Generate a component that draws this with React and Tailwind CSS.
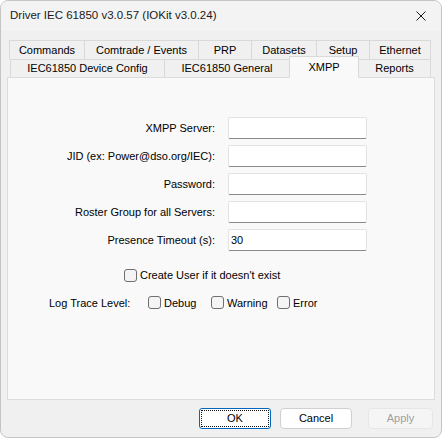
const rowOne = [
  { label: 'Commands', w: 'w-[75px]' },
  { label: 'Comtrade / Events', w: 'w-[114px]' },
  { label: 'PRP', w: 'w-[53px]' },
  { label: 'Datasets', w: 'w-[65px]' },
  { label: 'Setup', w: 'w-[53px]' },
  { label: 'Ethernet', w: 'w-[62px] border-r' },
];

const fields = [
  { label: 'XMPP Server:', value: '' },
  { label: 'JID (ex: Power@dso.org/IEC):', value: '' },
  { label: 'Password:', value: '' },
  { label: 'Roster Group for all Servers:', value: '' },
  { label: 'Presence Timeout (s):', value: '30' },
];

const Check = ({ label, className = '' }) => (
  <label className={`flex items-center gap-[3px] ${className}`}>
    <span className="w-[13px] h-[13px] rounded-[3px] border border-[#6f6f6f] bg-[#f4f4f4]" />
    <span>{label}</span>
  </label>
);

export default function App() {
  return (
    <div
      className="w-[442px] h-[438px] bg-white"
      style={{ fontFamily: '"Liberation Sans", Arial, sans-serif' }}
    >
      <div className="w-full h-full flex flex-col rounded-[8px] border border-[#c4c4c4] bg-[#f0f0f0] overflow-hidden text-[11px] text-black">
        {/* title bar */}
        <div className="h-[30px] flex items-center justify-between bg-[#f3f3f3] pl-[9px] pr-[10px]">
          <span className="text-[11.5px] text-[#1a1a1a]">Driver IEC 61850 v3.0.57 (IOKit v3.0.24)</span>
          <svg width="10" height="10" viewBox="0 0 10 10" className="mr-[5px]">
            <path d="M0.5 0.5 L9.5 9.5 M9.5 0.5 L0.5 9.5" stroke="#1a1a1a" strokeWidth="1" />
          </svg>
        </div>

        <div className="pt-[9px]">
          {/* tabs, back row */}
          <div className="flex ml-[8px] h-[19px]">
            {rowOne.map((t) => (
              <div
                key={t.label}
                className={`${t.w} border-t border-l border-[#d9d9d9] flex items-center justify-center`}
              >
                {t.label}
              </div>
            ))}
          </div>
          {/* tabs, front row */}
          <div className="flex ml-[9px] h-[18px]">
            <div className="w-[154px] border-t border-l border-[#d9d9d9] flex items-center justify-center">
              IEC61850 Device Config
            </div>
            <div className="w-[125px] border-t border-l border-[#d9d9d9] flex items-center justify-center">
              IEC61850 General
            </div>
            <div className="relative z-10 w-[70px] h-[22px] -mt-[3px] border-t border-l border-r border-[#d9d9d9] bg-[#f9f9f9] flex justify-center pt-[2px]">
              XMPP
            </div>
            <div className="w-[72px] border-t border-r border-[#d9d9d9] flex items-center justify-center">
              Reports
            </div>
          </div>

          {/* panel */}
          <div className="mx-[6px] h-[323px] border border-[#dcdcdc] bg-[#f9f9f9] pt-[39px]">
            <div className="flex flex-col gap-[6px]">
              {fields.map((f) => (
                <div key={f.label} className="flex items-center">
                  <span className="w-[207px] text-right">{f.label}</span>
                  <div className="ml-[13px] w-[139px] h-[22px] bg-white border border-[#e3e3e3] border-b-[#8a8a8a] rounded-[2px] flex items-center pl-[2px]">
                    {f.value}
                  </div>
                </div>
              ))}
            </div>

            <Check label="Create User if it doesn't exist" className="ml-[116px] mt-[16px]" />

            <div className="flex items-center mt-[11px]">
              <span className="ml-[41px] w-[99px]">Log Trace Level:</span>
              <Check label="Debug" className="w-[63px]" />
              <Check label="Warning" className="w-[66px]" />
              <Check label="Error" />
            </div>
          </div>

          {/* buttons */}
          <div className="flex justify-end gap-[9px] mt-[8px] pr-[8px]">
            <button className="w-[72px] h-[21px] rounded-[3px] border border-[#0067c0] bg-white p-[1px]">
              <span className="block w-full h-full border border-dotted border-[#111] leading-[15px]">OK</span>
            </button>
            <button className="w-[72px] h-[21px] rounded-[4px] border border-[#d0d0d0] bg-white">
              Cancel
            </button>
            <button className="ml-[7px] w-[65px] h-[21px] rounded-[4px] border border-[#e6e6e6] bg-[#f5f5f5] text-[#a0a0a0]">
              Apply
            </button>
          </div>
        </div>
      </div>
    </div>
  );
}
